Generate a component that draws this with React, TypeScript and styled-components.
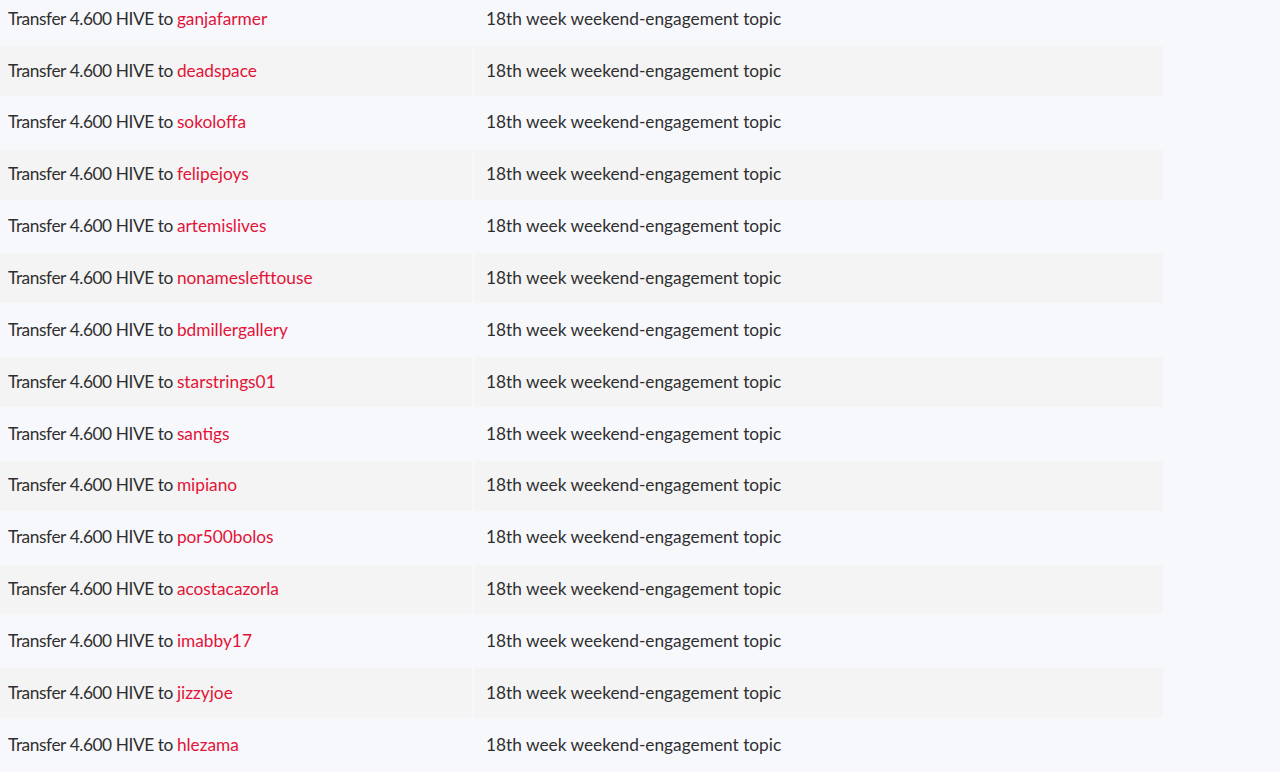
import styled, { createGlobalStyle } from "styled-components";

const Global = createGlobalStyle`
  html, body { margin: 0; background: #f7f8fc; overflow: hidden; }
  body { font-family: "Lato", "Noto Sans", sans-serif; color: #2f2f2f; }
`;

const Table = styled.table`
  border-collapse: separate;
  border-spacing: 2px;
  margin: -7.86px 0 0 -2px;
  font-size: 17.3px;
  line-height: 25.86px;
`;

const Row = styled.tr<{ $shaded: boolean }>`
  td {
    background: ${p => (p.$shaded ? "#f4f4f4" : "transparent")};
  }
`;

const Cell = styled.td<{ $w: number; $pl: number }>`
  width: ${p => p.$w}px;
  padding: 11.5px 8px 12.5px ${p => p.$pl}px;
  box-sizing: border-box;
  white-space: nowrap;
  vertical-align: middle;
`;

const Prefix = styled.span`
  letter-spacing: -0.42px;
`;

const User = styled.a`
  color: #e31337;
  text-decoration: none;
`;

const users = [
  "ganjafarmer", "deadspace", "sokoloffa", "felipejoys", "artemislives",
  "nonameslefttouse", "bdmillergallery", "starstrings01", "santigs", "mipiano",
  "por500bolos", "acostacazorla", "imabby17", "jizzyjoe", "hlezama",
];

export default function App() {
  return (
    <>
      <Global />
      <Table>
        <tbody>
          {users.map((u, i) => (
            <Row key={u} $shaded={i % 2 === 1}>
              <Cell $w={472} $pl={8}>
                <Prefix>Transfer 4.600 HIVE to </Prefix>
                <User href="#">{u}</User>
              </Cell>
              <Cell $w={689} $pl={12}>18th week weekend-engagement topic</Cell>
            </Row>
          ))}
        </tbody>
      </Table>
    </>
  );
}
